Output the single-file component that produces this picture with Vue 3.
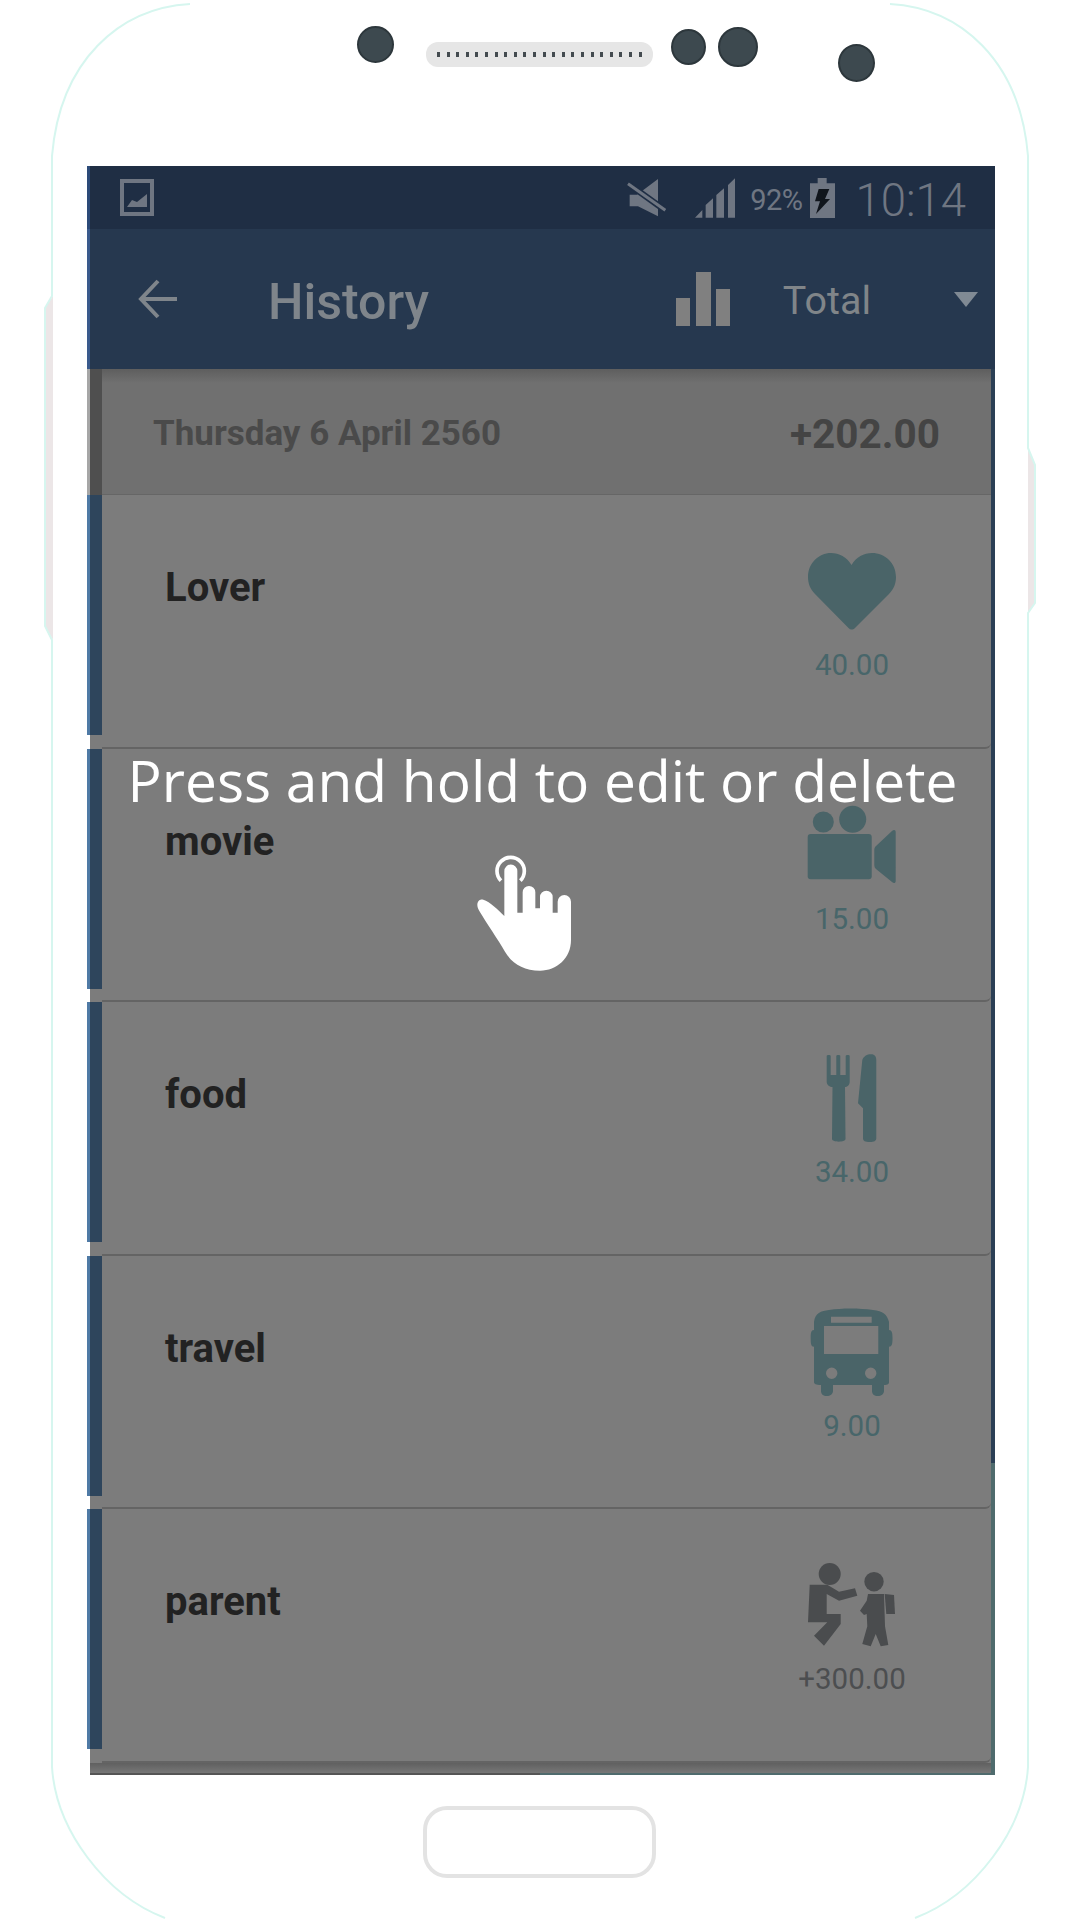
<script setup>
const rows = [
  { name: 'Lover', icon: 'heart', amount: '40.00' },
  { name: 'movie', icon: 'camera', amount: '15.00' },
  { name: 'food', icon: 'food', amount: '34.00' },
  { name: 'travel', icon: 'bus', amount: '9.00' },
  { name: 'parent', icon: 'parent', amount: '+300.00', dark: true }
]
</script>

<template>
  <div class="phone">
    <svg class="outline" width="1080" height="1920" viewBox="0 0 1080 1920">
      <path class="bump" d="M53 296 L45 308 V626 L53 640 Z" />
      <path class="bump" d="M1028 448 L1035 465 V603 L1028 613 Z" />
      <path d="M190 4 C120 8 60 60 52 156 V296 L45 308 V626 L52 640 V1767 C56 1830 105 1895 165 1918" />
      <path d="M890 4 C960 8 1020 60 1028 156 V448 L1035 465 V603 L1028 613 V1767 C1024 1830 975 1895 915 1918" />
    </svg>

    <div class="top-bezel">
      <span class="dot dot-a"></span>
      <span class="speaker"><span class="grille"></span></span>
      <span class="dot dot-b"></span>
      <span class="dot dot-c"></span>
      <span class="dot dot-d"></span>
    </div>

    <div class="screen">
      <div class="status">
        <svg class="st-image" width="34" height="37" viewBox="0 0 34 37">
          <rect x="2" y="2" width="30" height="33" fill="none" stroke="#6f7682" stroke-width="4" />
          <path d="M7 28 L12 21 L17 23 L27 15 V28 Z" fill="#6f7682" />
        </svg>
        <svg class="st-mute" width="40" height="40" viewBox="0 0 120 120">
          <path d="M8 50 H30 L93 3 V115 L33 85 H8 Z" fill="#6f7682" />
          <path d="M3 17 L115 97" stroke="#1f2e44" stroke-width="19" fill="none" />
          <path d="M3 17 L115 97" stroke="#6f7682" stroke-width="9" fill="none" />
        </svg>
        <svg class="st-signal" width="40" height="40" viewBox="0 0 120 120">
          <path d="M0 119 L22 96 V119 Z M32 119 V81 L54 61 V119 Z M64 119 V51 L87 31 V119 Z M99 119 V21 L120 1 V119 Z" fill="#6f7682" />
        </svg>
        <span class="st-pct">92%</span>
        <svg class="st-batt" width="25" height="40" viewBox="0 0 75 120">
          <path d="M23 0 H50 V16 H75 V120 H0 V16 H23 Z" fill="#6f7682" />
          <path d="M26 33 H58 L45 63 H60 L18 108 L30 70 H15 Z" fill="#10151c" />
        </svg>
        <span class="st-time">10:14</span>
      </div>

      <div class="appbar">
        <svg class="back" width="40" height="40" viewBox="0 0 40 40">
          <path d="M39 20 H3 M20 2 L3 20 L20 38" fill="none" stroke="#7f858b" stroke-width="4" />
        </svg>
        <span class="title">History</span>
        <svg class="chart" width="54" height="54" viewBox="0 0 54 54">
          <rect x="0" y="26" width="14" height="28" fill="#808080" />
          <rect x="20" y="0" width="15" height="54" fill="#808080" />
          <rect x="40" y="17" width="14" height="37" fill="#808080" />
        </svg>
        <span class="total">Total</span>
        <svg class="caret" width="24" height="15" viewBox="0 0 24 15"><path d="M0 0 H24 L12 15 Z" fill="#808a94" /></svg>
      </div>

      <div class="main">
        <div class="day">
          <span class="stripe stripe-day"></span>
          <div class="day-body">
            <span class="date">Thursday 6 April 2560</span>
            <span class="sum">+202.00</span>
          </div>
        </div>

        <div v-for="row in rows" :key="row.name" class="row">
          <span class="stripe"></span>
          <div class="row-body">
            <span class="name">{{ row.name }}</span>
            <div class="cell" :class="{ dark: row.dark }">
              <svg class="icon" width="90" height="90" viewBox="0 0 90 90">
                <path v-if="row.icon === 'heart'" d="M44.5 82.5c-1 0-2-.5-3-1.500L8 47C3 42 1 36 1 30 1 16 12 6 24 6c8 0 16 4 20.500 12C49 10 57 6 65 6c13 0 24 10 24 24 0 6-2 12-7 17L48 81c-1 1-2.500 1.500-3.500 1.500Z" />
                <g v-else-if="row.icon === 'camera'">
                  <circle cx="16.300" cy="21" r="10.500" />
                  <circle cx="45.700" cy="18.300" r="13.500" />
                  <rect x="0.700" y="33" width="64" height="45.300" rx="3" />
                  <path d="M67.300 49 C67.300 47 68 46 69 45 L85 30 C87 28 88.700 29 88.700 31 V80 C88.700 82 87 83 85 81 L69 68 C68 67 67.300 66 67.300 64 Z" />
                </g>
                <g v-else-if="row.icon === 'food'">
                  <path d="M19.700 2 C19.700 .8 23.700 .8 23.700 2 V21 H29.300 V2 C29.300 .8 33.300 .8 33.300 2 V21 H38.700 V2 C38.700 .8 42.700 .8 42.700 2 V28 C42.700 31 40 33 38 33 L38.500 85 C38.500 88.500 25 88.500 25 85 L25.500 33 C23 33 19.700 31 19.700 28 Z" />
                  <path d="M55.300 6 C57 2 60 .3 64 .3 C68 .3 69.300 3 69.300 6 V84 C69.300 87 67 88 63 88 C58 88 56 87 56 84 V54.300 L51 49.300 Z" />
                </g>
                <path v-else-if="row.icon === 'bus'" fill-rule="evenodd" d="M7 22 V14 C8 5 14 3 22 2 C35 0 52 0 66 2 C76 3 80 6 82 14 V22 C85 22 85.500 25 85.500 30 C85.500 36 85 38.700 82 38.700 V74 C82 76 81 77 77 77 V83 C77 86 74 88 71 88 C67 88 65 86 65 83 V77 H26 V83 C26 86 23 88 20 88 C16 88 14 86 14 83 V77 C9 77 7 76 7 74 V38.700 C4 38.700 3.700 36 3.700 30 C3.700 25 4 22 7 22 Z M24 8.700 V14.700 H64.700 V8.700 Z M17 18 V46 H71.300 V18 Z M24.700 59.600 A5.700 5.700 0 1 0 24.700 71 A5.700 5.700 0 1 0 24.700 59.600 Z M63.700 59.600 A5.700 5.700 0 1 0 63.700 71 A5.700 5.700 0 1 0 63.700 59.600 Z" />
                <g v-else>
                  <circle cx="22.700" cy="13" r="11" />
                  <path d="M2.700 23.700 H20.300 L32 30.700 L48 27.300 L50.300 34.700 L32 39.700 L19.700 33 V53 H33.700 V63 L17 84.700 L7 74.700 L20.300 61.300 H1 Z" />
                  <circle cx="67" cy="20.700" r="9.700" />
                  <path d="M61 33 H77 L78 65.300 L81.300 84 L73.700 85.300 L68.700 73 L63.700 85.300 L55.300 83 L60.300 65.300 L59.700 53 L57 54 L53 49.700 L59.700 39.700 Z" />
                  <path d="M77.700 33 L87 34 L88 53 L79.300 53 Z" />
                </g>
              </svg>
              <span class="amount">{{ row.amount }}</span>
            </div>
          </div>
        </div>

        <div class="foot"></div>
      </div>
    </div>

    <div class="bottom-bezel"><span class="home"></span></div>

    <div class="hint">Press and hold to edit or delete</div>
    <svg class="hand" width="160" height="160" viewBox="0 0 480 480">
      <path d="M183 152 A41 41 0 1 1 241 152" fill="none" stroke="#fff" stroke-width="11" />
      <path d="M193 123 a19.500 19.500 0 0 1 39 0 V248 H248 V187 a19 19 0 0 1 38 0 V235 H300 V201 a19 19 0 0 1 38 0 V248 H353 V215 a20 20 0 0 1 40 0 V330 C393 385 350 422 300 422 C250 422 215 400 195 365 C175 330 140 280 118 243 C105 222 115 205 130 209 C150 215 175 240 193 258 Z" fill="#fff" />
    </svg>
  </div>
</template>

<style scoped>
.phone {
  position: relative;
  width: 1080px;
  height: 1920px;
  overflow: hidden;
  background: #fff;
  font-family: Roboto, "Liberation Sans", sans-serif;
}
.outline {
  position: absolute;
  left: 0;
  top: 0;
  fill: none;
  stroke: #d6f6ef;
  stroke-width: 2;
}
.outline .bump {
  fill: #ece6e7;
  stroke: none;
}

.top-bezel {
  position: relative;
  display: flex;
  align-items: flex-start;
  height: 166px;
  box-sizing: border-box;
  padding-left: 357px;
}
.dot {
  flex: none;
  box-sizing: border-box;
  border-radius: 50%;
  background: #3d494f;
  border: 2px solid #2d373c;
}
.dot-a { width: 37px; height: 37px; margin-top: 26px; }
.dot-b { width: 35px; height: 36px; margin-top: 29px; margin-left: 18px; }
.dot-c { width: 40px; height: 40px; margin-top: 27px; margin-left: 12px; }
.dot-d { width: 37px; height: 38px; margin-top: 44px; margin-left: 80px; }
.speaker {
  flex: none;
  display: flex;
  align-items: center;
  justify-content: center;
  width: 227px;
  height: 25px;
  margin-top: 42px;
  margin-left: 32px;
  border-radius: 12px;
  background: #e6e6e6;
}
.grille {
  width: 206px;
  height: 5px;
  background: repeating-linear-gradient(90deg, #444b50 0 3px, transparent 3px 9.600px);
}

.screen {
  position: relative;
  margin-left: 87px;
  width: 908px;
}
.status {
  display: flex;
  align-items: center;
  height: 63px;
  box-sizing: border-box;
  padding: 0 29px 0 30px;
  background: #1f2e44;
  border-left: 3px solid #2c4a78;
  color: #6f7682;
}
.st-image { margin-right: auto; }
.st-signal { margin-left: 28px; }
.st-pct { margin-left: 15px; padding-top: 4px; font-size: 29px; letter-spacing: -0.500px; }
.st-batt { margin-left: 8px; }
.st-time { margin-left: 20px; padding-top: 6px; font-size: 45.500px; font-weight: 300; line-height: 1; }

.appbar {
  display: flex;
  align-items: center;
  height: 140px;
  box-sizing: border-box;
  padding: 0 17px 0 48px;
  background: #26384f;
  border-left: 3px solid #3a5a8c;
  color: #7f858b;
}
.title { margin-left: 90px; padding-top: 5px; font-size: 50px; font-weight: 500; }
.chart { margin-left: auto; }
.total { margin-left: 53px; padding-top: 2px; font-size: 39.500px; color: #808589; }
.caret { margin-left: 83px; }

.main {
  box-sizing: border-box;
  height: 1406px;
  padding-right: 4px;
  background: linear-gradient(#2b3f55 0 1094px, #4f6b6d 1094px) right / 4px 100% no-repeat;
}
.stripe {
  flex: none;
  align-self: flex-start;
  box-sizing: border-box;
  width: 15px;
  height: 240px;
  background: #2e455c;
  border-left: 3px solid #4f7aa5;
}
.stripe-day {
  height: 100%;
  background: #4f4f4f;
  border-left-color: #a6a6a6;
}
.day {
  display: flex;
  height: 126px;
}
.day-body {
  flex: 1;
  display: flex;
  align-items: center;
  justify-content: space-between;
  padding: 4px 51px 0 51px;
  background: linear-gradient(#5e5e5e, #707070 14px);
  border-bottom: 1px solid #666;
}
.date { font-size: 35px; font-weight: 700; color: #4a4a4a; }
.sum { font-size: 40.500px; font-weight: 700; color: #444; }

.row {
  display: flex;
  height: 253.600px;
  background: linear-gradient(90deg, #fff 3px, #7c7c7c 3px);
}
.row-body {
  flex: 1;
  display: flex;
  justify-content: space-between;
  box-sizing: border-box;
  padding-right: 94px;
  background: #7c7c7c;
  border-bottom: 2px solid #646464;
  border-radius: 0 0 6px 0;
}
.name {
  margin: 70px 0 0 63px;
  font-size: 40px;
  line-height: 46px;
  font-weight: 700;
  color: #222;
}
.cell {
  display: flex;
  flex-direction: column;
  align-items: center;
  width: 90px;
  padding-top: 52px;
  color: #48666a;
  fill: #4a6468;
}
.cell.dark { color: #4c4e50; }
.cell.dark .icon { fill: #4a4c4e; }
.icon { flex: none; }
.amount {
  margin-top: 10px;
  font-size: 29.500px;
  line-height: 36px;
  white-space: nowrap;
}

.foot {
  height: 12px;
  margin-left: 3px;
  box-sizing: border-box;
  background: linear-gradient(#606060, #777);
  border-bottom: 2px solid;
  border-image: linear-gradient(90deg, #555 50%, #4f6b6d 50%) 1;
}

.bottom-bezel {
  position: relative;
  padding: 31px 0 0 423px;
}
.home {
  display: block;
  box-sizing: border-box;
  width: 233px;
  height: 72px;
  border: 4px solid #e3e3e3;
  border-radius: 24px;
}

.hint {
  position: absolute;
  left: 0;
  right: 0;
  top: 742px;
  padding-left: 5px;
  text-align: center;
  font-family: "Open Sans", sans-serif;
  font-size: 56.850px;
  line-height: 76px;
  color: #fff;
}
.hand {
  position: absolute;
  left: 440px;
  top: 830px;
}
</style>

<style>
body { background: #fff; }
</style>
